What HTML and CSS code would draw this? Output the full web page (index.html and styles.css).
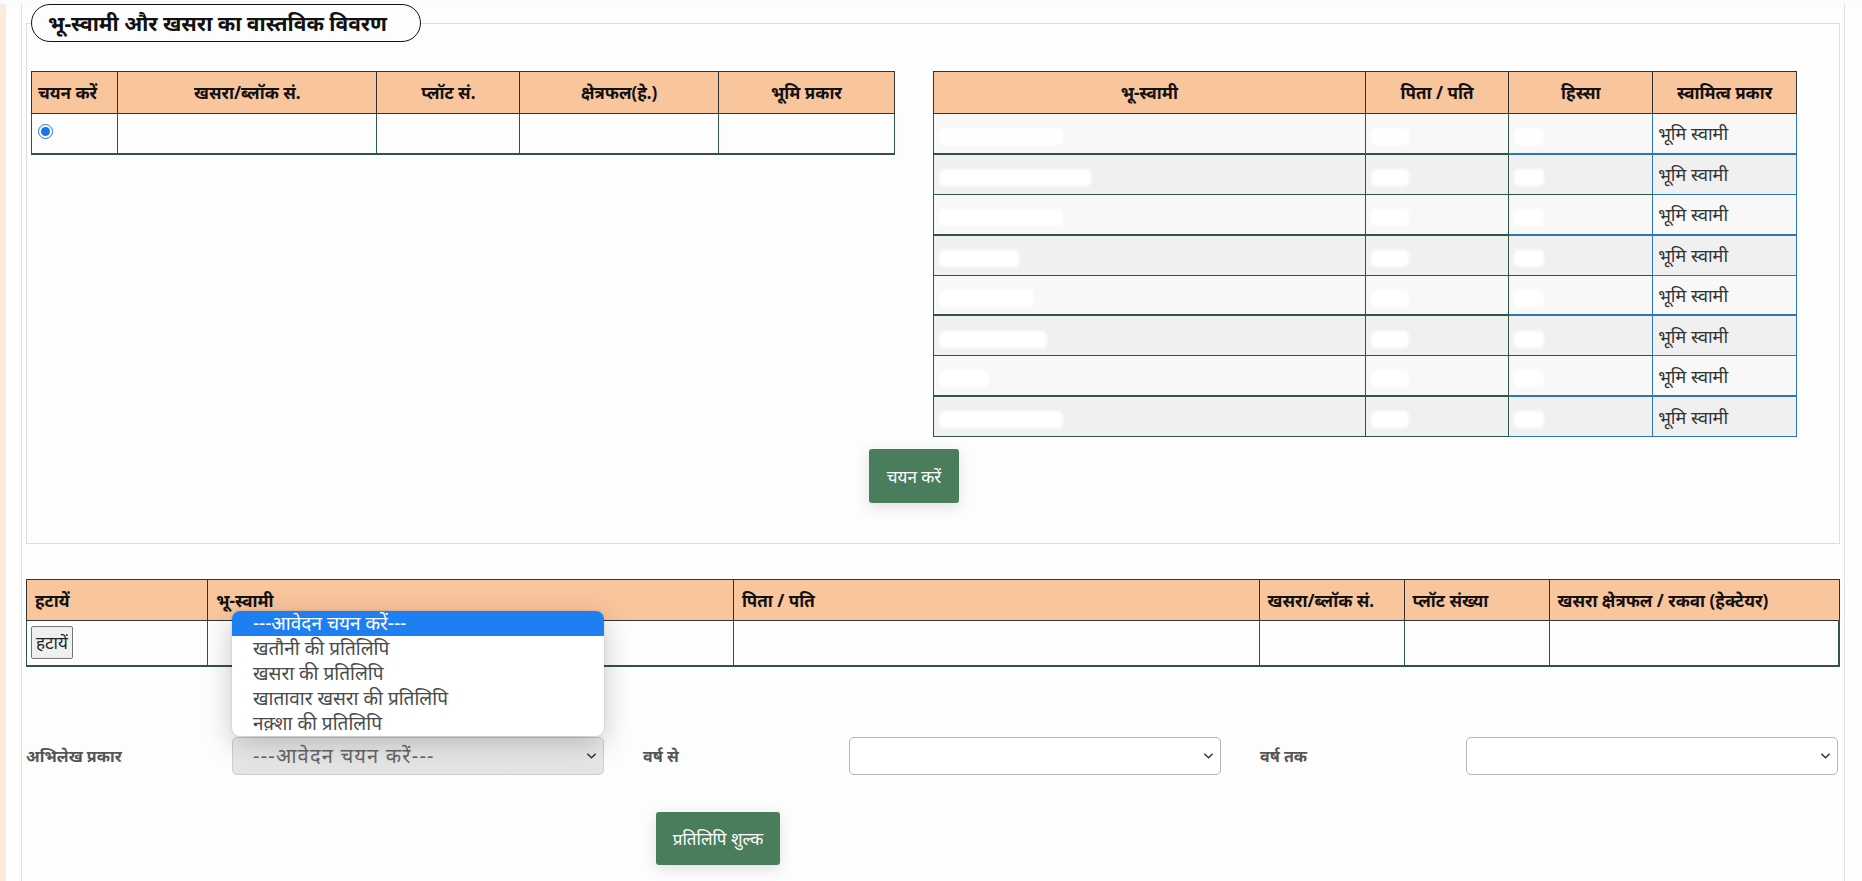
FILE: index.html
```html
<!DOCTYPE html>
<html lang="hi">
<head>
<meta charset="utf-8">
<title>भू-स्वामी और खसरा का वास्तविक विवरण</title>
<link rel="stylesheet" href="styles.css">
</head>
<body>
<div class="page">
  <div class="frame">
    <fieldset class="fs">
      <legend class="lg">भू-स्वामी और खसरा का वास्तविक विवरण</legend>
      <div class="tables">
        <table class="tbl tl">
          <colgroup><col class="l1"><col class="l2"><col class="l3"><col class="l4"><col class="l5"></colgroup>
          <thead>
            <tr><th class="th-left">चयन करें</th><th>खसरा/ब्लॉक सं.</th><th>प्लॉट सं.</th><th>क्षेत्रफल(हे.)</th><th>भूमि प्रकार</th></tr>
          </thead>
          <tbody>
            <tr><td><input class="radio" type="radio" checked></td><td></td><td></td><td></td><td></td></tr>
          </tbody>
        </table>
        <table class="tbl tr-tbl">
          <colgroup><col class="r1"><col class="r2"><col class="r2"><col class="r2"></colgroup>
          <thead>
            <tr><th>भू-स्वामी</th><th>पिता / पति</th><th>हिस्सा</th><th>स्वामित्व प्रकार</th></tr>
          </thead>
          <tbody>
            <tr class="odd k"><td class="c1"><span class="blot w-l"></span></td><td class="c2"><span class="blot w-t"></span></td><td class="c3"><span class="blot w-u"></span></td><td class="c4">भूमि स्वामी</td></tr>
            <tr class="even n"><td class="c1"><span class="blot w-xl"></span></td><td class="c2"><span class="blot w-t"></span></td><td class="c3"><span class="blot w-u"></span></td><td class="c4">भूमि स्वामी</td></tr>
            <tr class="odd k"><td class="c1"><span class="blot w-l"></span></td><td class="c2"><span class="blot w-t"></span></td><td class="c3"><span class="blot w-u"></span></td><td class="c4">भूमि स्वामी</td></tr>
            <tr class="even n"><td class="c1"><span class="blot w-s"></span></td><td class="c2"><span class="blot w-t"></span></td><td class="c3"><span class="blot w-u"></span></td><td class="c4">भूमि स्वामी</td></tr>
            <tr class="odd k"><td class="c1"><span class="blot w-m"></span></td><td class="c2"><span class="blot w-t"></span></td><td class="c3"><span class="blot w-u"></span></td><td class="c4">भूमि स्वामी</td></tr>
            <tr class="even n"><td class="c1"><span class="blot w-ml"></span></td><td class="c2"><span class="blot w-t"></span></td><td class="c3"><span class="blot w-u"></span></td><td class="c4">भूमि स्वामी</td></tr>
            <tr class="odd k"><td class="c1"><span class="blot w-xs"></span></td><td class="c2"><span class="blot w-t"></span></td><td class="c3"><span class="blot w-u"></span></td><td class="c4">भूमि स्वामी</td></tr>
            <tr class="even n last"><td class="c1"><span class="blot w-l"></span></td><td class="c2"><span class="blot w-t"></span></td><td class="c3"><span class="blot w-u"></span></td><td class="c4">भूमि स्वामी</td></tr>
          </tbody>
        </table>
      </div>
      <div class="btn-row">
        <button class="btn-green btn-select" type="button">चयन करें</button>
      </div>
    </fieldset>

    <table class="tbl tb">
      <colgroup><col class="b1"><col class="b2"><col class="b2"><col class="b4"><col class="b4"><col class="b6"></colgroup>
      <thead>
        <tr><th>हटायें</th><th>भू-स्वामी</th><th>पिता / पति</th><th>खसरा/ब्लॉक सं.</th><th>प्लॉट संख्या</th><th>खसरा क्षेत्रफल / रकवा (हेक्टेयर)</th></tr>
      </thead>
      <tbody>
        <tr><td><button class="btn-remove" type="button">हटायें</button></td><td></td><td></td><td></td><td></td><td></td></tr>
      </tbody>
    </table>

    <div class="form-row">
      <label class="lbl">अभिलेख प्रकार</label>
      <div class="sel-wrap">
        <div class="popup">
          <div class="opt active">---आवेदन चयन करें---</div>
          <div class="opt">खतौनी की प्रतिलिपि</div>
          <div class="opt">खसरा की प्रतिलिपि</div>
          <div class="opt">खातावार खसरा की प्रतिलिपि</div>
          <div class="opt">नक़्शा की प्रतिलिपि</div>
        </div>
        <div class="sel sel-open"><span class="sel-text">---आवेदन चयन करें---</span>
          <svg class="chev" viewBox="0 0 12 8" width="11" height="8"><path d="M1.5 1.5 L6 6 L10.5 1.5" fill="none" stroke="#333" stroke-width="1.6"/></svg>
        </div>
      </div>
      <label class="lbl">वर्ष से</label>
      <div class="sel-wrap">
        <div class="sel"><span class="sel-text"></span>
          <svg class="chev" viewBox="0 0 12 8" width="11" height="8"><path d="M1.5 1.5 L6 6 L10.5 1.5" fill="none" stroke="#333" stroke-width="1.6"/></svg>
        </div>
      </div>
      <label class="lbl">वर्ष तक</label>
      <div class="sel-wrap">
        <div class="sel"><span class="sel-text"></span>
          <svg class="chev" viewBox="0 0 12 8" width="11" height="8"><path d="M1.5 1.5 L6 6 L10.5 1.5" fill="none" stroke="#333" stroke-width="1.6"/></svg>
        </div>
      </div>
    </div>

    <div class="fee-row">
      <button class="btn-green btn-fee" type="button">प्रतिलिपि शुल्क</button>
    </div>
  </div>
</div>
</body>
</html>
```
FILE: styles.css
```css
* { box-sizing: border-box; }
html, body { margin: 0; padding: 0; }
body {
  background: #fcfcfc;
  font-family: "Noto Sans", "Liberation Sans", sans-serif;
  color: #222;
  width: 1862px;
  height: 881px;
  overflow: hidden;
}
.page {
  border-left: 6px solid #fcebdd;
  padding-left: 15px;
  background: #fdfdfd;
  height: 881px;
}
.frame {
  width: 1824px;
  height: 881px;
  border-left: 1px solid #e1e1e1;
  border-right: 1px solid #e1e1e1;
  padding: 0 4px;
  background: #fdfdfd;
}

/* fieldset */
.fs {
  margin: 4px 0 0 0;
  border: 1px solid #dedede;
  padding: 0 4px 40px 4px;
  min-width: 0;
}
.lg {
  border: 1px solid #111;
  border-radius: 20px;
  padding: 0 16px;
  height: 38px;
  line-height: 36px;
  font-size: 21px;
  font-weight: bold;
  color: #111;
  background: #fdfdfd;
  width: 390px;
  white-space: nowrap;
}
.tables {
  display: grid;
  grid-template-columns: 1fr 1fr;
  align-items: start;
  margin-top: 29px;
}
.tbl {
  border-collapse: collapse;
  table-layout: fixed;
}
.tl, .tr-tbl { width: calc(100% - 38px); }
.tbl th {
  background: #f9c59d;
  border: 1px solid #333;
  height: 42px;
  font-size: 17px;
  font-weight: bold;
  color: #111;
  text-align: center;
  padding: 0 6px;
}
.tbl th.th-left { text-align: left; }
.tbl td {
  border: 1px solid #2f5545;
  height: 40px;
  padding: 0 5px;
  font-size: 18px;
  color: #333;
  vertical-align: middle;
}
.tl tbody td { background: #fdfdfd; border-bottom: 2px solid #2f5545; }
.l1 { width: 10%; }
.l2 { width: 30%; }
.l3 { width: 16.6%; }
.l4 { width: 23%; }
.l5 { width: 20.4%; }
.r1 { width: 50%; }
.r2 { width: 16.66%; }
.radio {
  width: 15px;
  height: 15px;
  margin: -4px 0 0 1px;
  accent-color: #1a73e8;
  display: block;
}

/* right table rows */
.tr-tbl td { height: 40.4px; }
.tr-tbl tr.odd td { background: #f8f8f8; }
.tr-tbl tr.even td { background: #f0f0f0; }
.tr-tbl td.c1, .tr-tbl td.c2 { border-color: #2f5545; }
.tr-tbl td.c3 { border-left-color: #2f5545; border-right-color: #2e75b6; border-top-color: #2f5545; border-bottom-color: #2f5545; }
.tr-tbl td.c4 { border-color: #2e75b6; padding-left: 5px; }
.tr-tbl tr.k td { border-bottom-width: 2px; }
.tr-tbl tr.k td.c3 { border-bottom-color: #2e75b6; }
.tr-tbl tr.last td.c3 { border-bottom-color: #2e75b6; }

.blot {
  display: inline-block;
  height: 17px;
  background: #ffffff;
  border-radius: 5px;
  filter: blur(1.5px);
  vertical-align: middle;
  margin-top: 2px;
}
.w-xl { width: 152px; }
.w-l { width: 124px; }
.w-ml { width: 108px; }
.w-m { width: 95px; }
.w-s { width: 80px; }
.w-xs { width: 50px; }
.w-t { width: 38px; }
.w-u { width: 30px; }

.btn-row {
  display: flex;
  justify-content: center;
  padding-right: 38px;
  margin-top: 12px;
}
.btn-green {
  background: #4a7d5c;
  color: #fff;
  border: none;
  border-radius: 3px;
  font-family: inherit;
  box-shadow: 0 4px 14px rgba(0, 0, 0, 0.12);
  cursor: pointer;
}
.btn-select {
  width: 90px;
  height: 54px;
  font-size: 17px;
}

/* bottom table */
.tb {
  width: 100%;
  margin-top: 35px;
}
.tb th {
  text-align: left;
  padding: 0 8px;
  height: 41px;
}
.tb td {
  height: 45px;
  background: #fdfdfd;
  padding: 0 4px;
  border-bottom-width: 2px;
}
.tb td:last-child { border-right-width: 2px; }
.b1 { width: 10%; }
.b2 { width: 29%; }
.b4 { width: 8%; }
.b6 { width: 16%; }
.btn-remove {
  font-family: inherit;
  font-size: 17px;
  color: #222;
  background: #efefef;
  border: 1px solid #767676;
  border-radius: 2px;
  height: 33px;
  padding: 0 4px;
  display: block;
}

/* form row */
.form-row {
  display: grid;
  grid-template-columns: 206px 411px 206px 411px 206px 1fr;
  align-items: center;
  margin-top: 70px;
}
.lbl {
  font-size: 16px;
  font-weight: bold;
  color: #555;
}
.sel-wrap {
  position: relative;
  width: 372px;
}
.sel {
  height: 38px;
  border: 1px solid #b5b5b5;
  border-radius: 5px;
  background: #fff;
  display: flex;
  align-items: center;
  justify-content: space-between;
  padding: 0 6px 0 20px;
}
.sel-open {
  background: linear-gradient(#ececec, #e4e4e4);
  border-color: #cdcdcd;
}
.sel-text {
  font-size: 20px;
  color: #666;
  letter-spacing: 1.2px;
}
.chev { display: block; }
.popup {
  position: absolute;
  left: 0;
  bottom: calc(100% + 1px);
  width: 372px;
  background: #fff;
  border-radius: 8px;
  box-shadow: 0 8px 28px rgba(0, 0, 0, 0.22), 0 0 2px rgba(0, 0, 0, 0.2);
  overflow: hidden;
  z-index: 5;
}
.opt {
  height: 25px;
  line-height: 25px;
  padding-left: 21px;
  font-size: 19px;
  color: #4a4a4a;
  white-space: nowrap;
}
.opt.active {
  background: #1e7ff2;
  color: #fff;
}

.fee-row {
  margin-top: 37px;
  padding-left: 630px;
}
.btn-fee {
  width: 124px;
  height: 53px;
  font-size: 17px;
}
```
